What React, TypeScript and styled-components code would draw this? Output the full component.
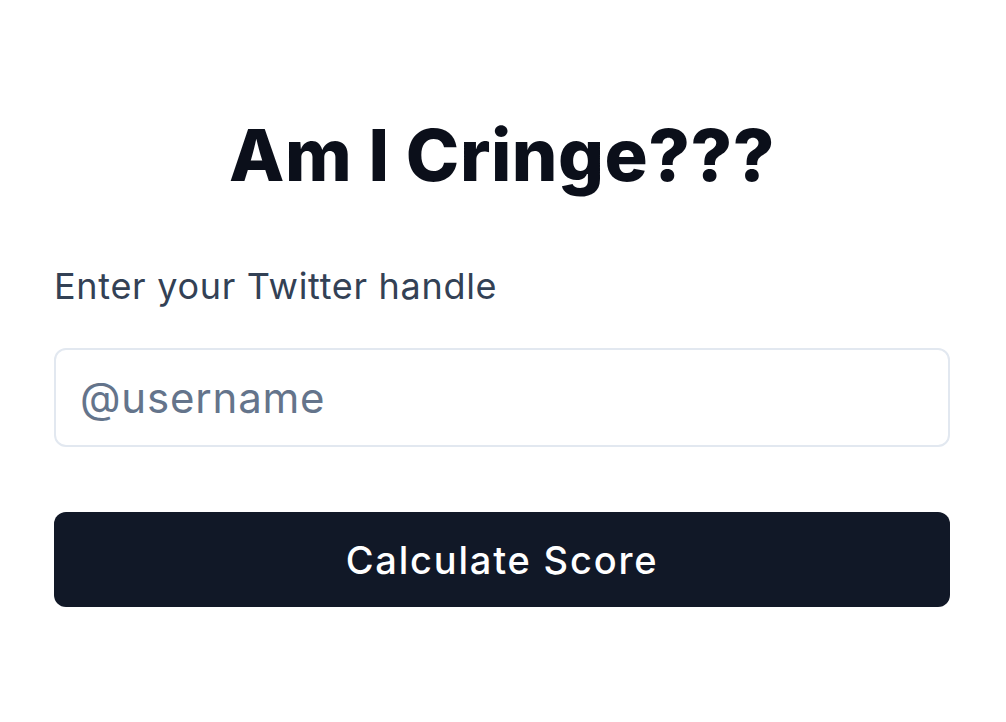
import React from "react";
import styled, { createGlobalStyle } from "styled-components";

const GlobalStyle = createGlobalStyle`
  body {
    margin: 0;
    background: #ffffff;
    font-family: Inter, "Noto Sans", sans-serif;
  }
`;

const App: React.FC = () => {
  return (
    <>
      <GlobalStyle />
      <Page>
        <Card>
          <Title>Am I Cringe???</Title>
          <Label htmlFor="handle">Enter your Twitter handle</Label>
          <HandleInput id="handle" placeholder="@username" />
          <SubmitButton type="button">Calculate Score</SubmitButton>
        </Card>
      </Page>
    </>
  );
};

export default App;

const Page = styled.div`
  display: flex;
  justify-content: center;
  padding-top: 115px;
  padding-right: 2px;
`;

const Card = styled.div`
  display: flex;
  flex-direction: column;
  width: 896px;
`;

const Title = styled.h1`
  margin: 0;
  font-size: 72px;
  line-height: 80px;
  font-weight: 800;
  letter-spacing: 0.5px;
  text-align: center;
  color: #0b0f1a;
`;

const Label = styled.label`
  margin-top: 67px;
  font-size: 36px;
  line-height: 48px;
  letter-spacing: 0.7px;
  color: #334155;
`;

const HandleInput = styled.input`
  margin-top: 38px;
  height: 99px;
  box-sizing: border-box;
  border: 2px solid #e2e8f0;
  border-radius: 12px;
  padding: 0 24px;
  font-family: Inter, "Noto Sans", sans-serif;
  font-size: 42px;
  letter-spacing: 0.8px;
  color: #0f172a;
  outline: none;

  &::placeholder {
    color: #64748b;
  }
`;

const SubmitButton = styled.button`
  margin-top: 65px;
  height: 95px;
  border: none;
  border-radius: 12px;
  background: #111827;
  color: #ffffff;
  font-family: Inter, "Noto Sans", sans-serif;
  font-size: 38px;
  font-weight: 500;
  letter-spacing: 1.8px;
  cursor: pointer;
`;
